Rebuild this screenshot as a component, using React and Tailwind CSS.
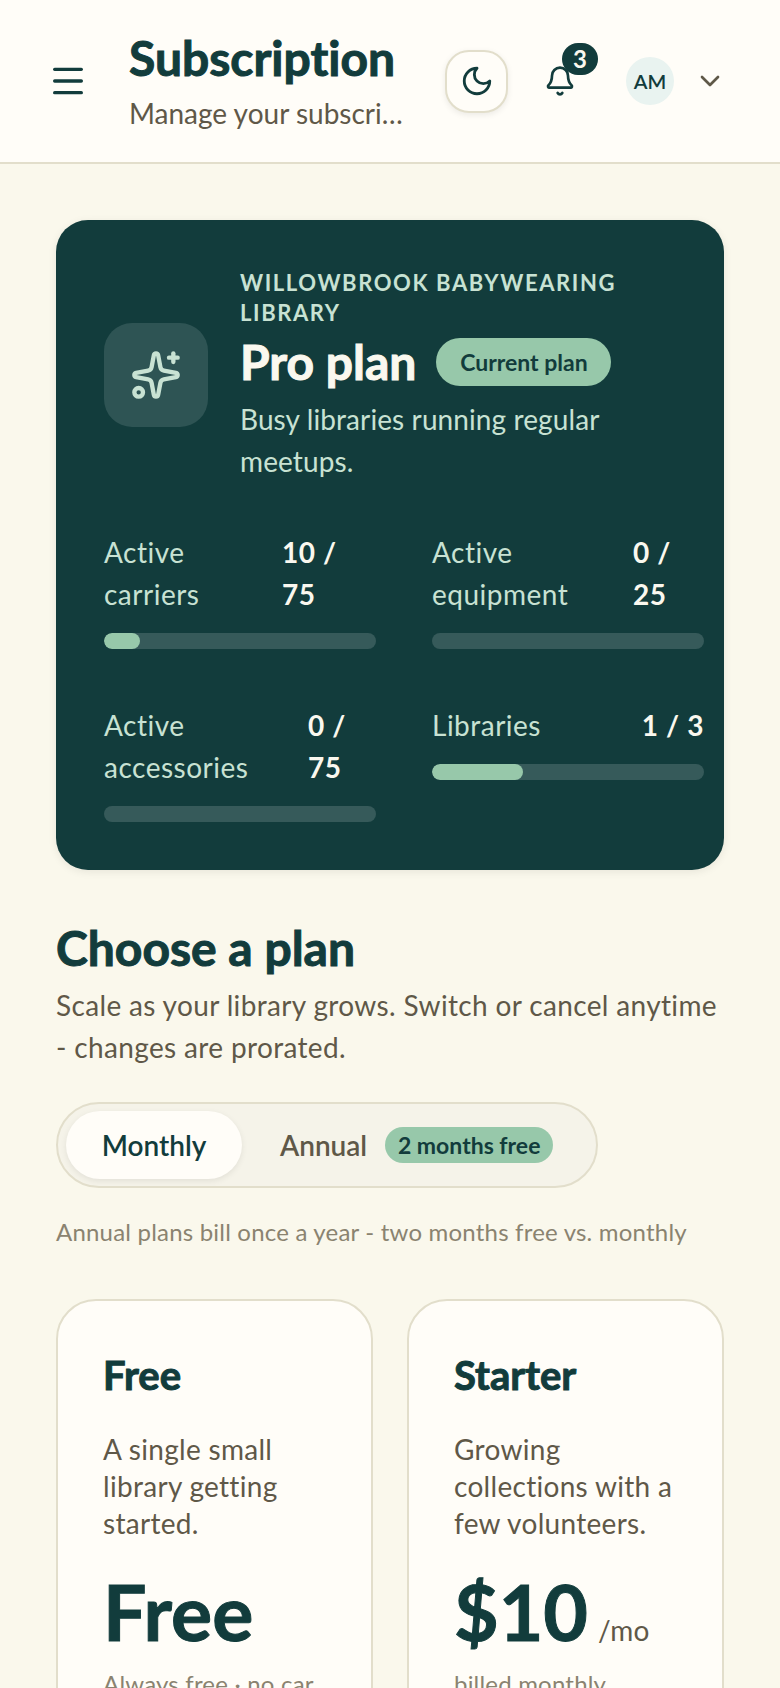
import { Menu, Bell, ChevronDown, Sparkles } from "lucide-react";

const stats = [
  { label: ["Active", "carriers"], value: ["10 /", "75"], valueClass: "w-[94px]", fill: "w-[13.3%]" },
  { label: ["Active", "equipment"], value: ["0 /", "25"], valueClass: "w-[71px]", fill: "w-0" },
  { label: ["Active", "accessories"], value: ["0 /", "75"], valueClass: "w-[68px]", fill: "w-0" },
  { label: ["Libraries"], value: ["1 / 3"], valueClass: "", fill: "w-[33.3%]" },
];

const heavy = "font-bold [-webkit-text-stroke:1px_currentColor]";

function MoonIcon() {
  return (
    <svg width="34" height="34" viewBox="0 0 24 24" fill="none" stroke="#123c3c" strokeWidth="2" strokeLinecap="round" strokeLinejoin="round">
      <path d="M12 3a6 6 0 0 0 9 9 9 9 0 1 1-9-9Z" />
    </svg>
  );
}

function StatBar({ stat }) {
  return (
    <div>
      <div className="flex justify-between text-[28px] leading-[42px]">
        <div className="text-[#c8e2d3] tracking-[0.5px]">
          {stat.label.map((line) => (
            <div key={line}>{line}</div>
          ))}
        </div>
        <div className={`${stat.valueClass} font-bold text-[#faf8ef] tracking-[0.6px]`}>
          {stat.value.map((line) => (
            <div key={line}>{line}</div>
          ))}
        </div>
      </div>
      <div className="mt-[18px] h-4 rounded-full bg-[#365a5a] overflow-hidden">
        <div className={`h-full rounded-full bg-[#97c8aa] ${stat.fill}`} />
      </div>
    </div>
  );
}

function PlanCard({ name, desc, price, suffix, note }) {
  return (
    <div className="rounded-[40px] border-2 border-[#e2decb] bg-[#fffdf8] px-[45px] pt-[46px] pb-12">
      <h3 className={`text-[40px] leading-[56px] text-[#123c3c] ${heavy}`}>{name}</h3>
      <p className="mt-[28px] text-[28px] leading-[37px] tracking-[0.3px] text-[#5f5848]">
        {desc.map((line) => (
          <span key={line} className="block">{line}</span>
        ))}
      </p>
      <div className="mt-[29px] flex items-baseline gap-[10px]">
        <span className={`text-[77px] leading-[80px] text-[#123c3c] ${heavy}`}>{price}</span>
        {suffix && <span className="text-[28px] tracking-[0.3px] text-[#5f5848]">{suffix}</span>}
      </div>
      <p className="mt-[15px] text-[24px] leading-[36px] tracking-[0.2px] text-[#8a8370] whitespace-nowrap">{note}</p>
    </div>
  );
}

export default function App() {
  return (
    <div className="h-screen overflow-hidden bg-[#faf8ec] [font-variant-ligatures:none] font-['Lato','Liberation_Sans',sans-serif]">
      <header className="h-[164px] flex items-center border-b-2 border-[#e2decb] bg-[#fffdf8] pl-12">
        <Menu size={40} className="text-[#123c3c] shrink-0" />
        <div className="ml-[41px] w-[276px] shrink-0">
          <h1 className={`text-[48px] leading-[60px] text-[#123c3c] ${heavy}`}>Subscription</h1>
          <p className="mt-[4px] text-[28px] leading-[42px] text-[#5f5848] truncate">Manage your subscription</p>
        </div>
        <button className="ml-[40px] w-[63px] h-[63px] rounded-[24px] border-2 border-[#e2decb] bg-[#fffdf8] shadow-[0_2px_6px_rgba(0,0,0,0.08)] flex items-center justify-center shrink-0">
          <MoonIcon />
        </button>
        <div className="relative ml-[36px] shrink-0">
          <Bell size={32} className="text-[#123c3c]" />
          <span className="absolute -top-[22px] left-[18px] w-9 h-8 rounded-full bg-[#123c3c] text-[#faf8ef] text-[24px] leading-8 font-bold text-center">3</span>
        </div>
        <div className="ml-[50px] w-12 h-12 rounded-full bg-[#e9f3f0] text-[#123c3c] text-[20px] font-semibold flex items-center justify-center shrink-0">AM</div>
        <ChevronDown size={32} className="ml-[20px] text-[#5f5848] shrink-0" />
      </header>

      <main className="px-14 pt-14">
        <section className="rounded-[32px] bg-[#123c3c] shadow-[0_2px_8px_rgba(0,0,0,0.08)] p-12">
          <div className="flex items-center gap-[32px]">
            <div className="w-[104px] h-[104px] rounded-[28px] bg-[#2e5454] flex items-center justify-center shrink-0">
              <Sparkles size={52} className="text-[#c8e2d3]" />
            </div>
            <div>
              <p className="text-[22px] leading-[30px] font-bold tracking-[1.6px] text-[#c8e2d3] uppercase">
                Willowbrook Babywearing Library
              </p>
              <div className="flex items-center gap-[20px] mt-[2px]">
                <span className={`text-[48px] leading-[64px] text-[#faf8ef] ${heavy}`}>Pro plan</span>
                <span className="w-[175px] h-12 rounded-full bg-[#97c8aa] text-[#123c3c] text-[23px] font-bold flex items-center justify-center">Current plan</span>
              </div>
              <p className="mt-[4px] text-[28px] leading-[42px] tracking-[0.1px] text-[#c8e2d3]">Busy libraries running regular meetups.</p>
            </div>
          </div>
          <div className="mt-[49px] grid grid-cols-[272px_272px] gap-x-14 gap-y-[55px]">
            {stats.map((stat) => (
              <StatBar key={stat.label.join(" ")} stat={stat} />
            ))}
          </div>
        </section>

        <section className="mt-[48px]">
          <h2 className={`text-[48px] leading-[60px] text-[#123c3c] ${heavy}`}>Choose a plan</h2>
          <p className="mt-[6px] text-[28px] leading-[42px] tracking-[0.35px] text-[#5f5848]">
            Scale as your library grows. Switch or cancel anytime
            <br />- changes are prorated.
          </p>

          <div className="mt-[34px] w-[542px] h-[86px] rounded-full border-2 border-[#e2decb] bg-[#f5f3e9] flex items-center pl-2 pr-2">
            <button className="w-[176px] h-[68px] rounded-full bg-[#fffdf8] shadow-[0_2px_6px_rgba(0,0,0,0.08)] text-[28px] font-semibold text-[#123c3c]">
              Monthly
            </button>
            <div className="ml-[38px] flex items-center gap-[18px]">
              <span className="text-[28px] font-semibold text-[#5f5848]">Annual</span>
              <span className="w-[168px] h-9 rounded-full bg-[#97c8aa] text-[#123c3c] text-[23px] font-bold flex items-center justify-center">2 months free</span>
            </div>
          </div>

          <p className="mt-[26px] text-[24px] leading-[36px] tracking-[0.2px] text-[#8a8370]">
            Annual plans bill once a year - two months free vs. monthly
          </p>

          <div className="mt-[49px] grid grid-cols-2 gap-[34px]">
            <PlanCard
              name="Free"
              desc={["A single small", "library getting", "started."]}
              price="Free"
              note="Always free · no car"
            />
            <PlanCard
              name="Starter"
              desc={["Growing", "collections with a", "few volunteers."]}
              price="$10"
              suffix="/mo"
              note="billed monthly"
            />
          </div>
        </section>
      </main>
    </div>
  );
}
